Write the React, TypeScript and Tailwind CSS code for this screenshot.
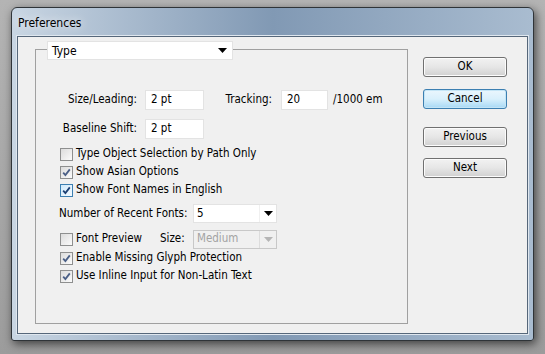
import { ReactNode } from "react";

function Check({ checked, focus }: { checked?: boolean; focus?: boolean }) {
  return (
    <span
      className={`relative inline-flex h-[13px] w-[13px] shrink-0 items-center justify-center border ${
        focus
          ? "border-[#3c7fb1] bg-gradient-to-br from-[#cfe9fb] to-[#f4faff]"
          : "border-[#8e8f8f] bg-gradient-to-br from-[#dcdcdc] to-[#fbfbfb]"
      }`}
    >
      {checked && (
        <svg width="9" height="9" viewBox="0 0 9 9">
          <path
            d="M1.2 4.6 L3.4 7 L7.8 1.4"
            fill="none"
            stroke={focus ? "#1c3f73" : "#4a5f86"}
            strokeWidth="1.8"
          />
        </svg>
      )}
    </span>
  );
}

function CheckRow({
  label,
  checked,
  focus,
}: {
  label: string;
  checked?: boolean;
  focus?: boolean;
}) {
  return (
    <div className="flex h-[18px] items-center gap-[3px] whitespace-nowrap">
      <Check checked={checked} focus={focus} />
      <span>{label}</span>
    </div>
  );
}

function Field({ value, w }: { value: string; w: string }) {
  return (
    <div
      className={`${w} flex h-[20px] items-center border border-[#e3e3e3] bg-white pl-[5px]`}
    >
      {value}
    </div>
  );
}

function Arrow({ color = "#000" }: { color?: string }) {
  return (
    <svg width="9" height="5" viewBox="0 0 9 5">
      <path d="M0 0 H9 L4.5 5 Z" fill={color} />
    </svg>
  );
}

function Select({
  value,
  w,
  disabled,
}: {
  value: string;
  w: string;
  disabled?: boolean;
}) {
  return (
    <div
      className={`${w} flex h-[19px] items-center border ${
        disabled
          ? "border-[#c8c8c8] bg-[#f0f0f0] text-[#a3a3a3]"
          : "border-[#e3e3e3] bg-white"
      }`}
    >
      <span className="flex-1 pl-[3px]">{value}</span>
      <span
        className={`flex h-full w-[17px] items-center justify-center border-l ${
          disabled ? "border-[#dcdcdc]" : "border-[#f0f0f0]"
        }`}
      >
        <Arrow color={disabled ? "#b5b5b5" : "#000"} />
      </span>
    </div>
  );
}

function Button({ children, focus }: { children: ReactNode; focus?: boolean }) {
  return (
    <div
      className={`flex h-[20px] w-[84px] items-center justify-center rounded-[3px] border ${
        focus
          ? "border-[#3c7fb1] bg-gradient-to-b from-[#eaf6fd] via-[#d9f0fc] to-[#a7d9f5] shadow-[inset_0_0_0_1px_#c4e5f6]"
          : "border-[#707070] bg-gradient-to-b from-[#f2f2f2] via-[#e6e6e6] to-[#d0d0d0] shadow-[inset_0_0_0_1px_#fcfcfc]"
      }`}
    >
      {children}
    </div>
  );
}

export default function App() {
  return (
    <div
      className="h-[354px] w-[545px] overflow-hidden bg-gradient-to-b from-[#b4b4b4] to-[#9c9c9c] pl-[11px] pt-[7px] text-[11.5px] text-black"
      style={{ fontFamily: '"DejaVu Sans Condensed", "DejaVu Sans", sans-serif' }}
    >
      <div className="flex h-[334px] w-[523px] flex-col rounded-t-[6px] rounded-b-[3px] border border-[#2f3438] bg-gradient-to-r from-[#c9d6e3] via-[#8199b4] to-[#a9bcd0] shadow-[2px_3px_10px_rgba(0,0,0,0.6)]">
        <div className="flex h-[28px] items-center pl-[6px] pt-[2px] text-[12px]">
          <span className="[text-shadow:0_0_8px_#ffffff]">Preferences</span>
        </div>
        <div className="mx-[5px] mb-[6px] flex flex-1 border border-[#56677a] bg-[#f0f0f0] shadow-[0_0_0_1px_#dfe7ef]">
          <div className="relative ml-[17px] mt-[12px] h-[275px] w-[373px] whitespace-nowrap border border-[#a0a0a0] pl-[24px]">
            <div className="absolute left-[11px] top-[-9px] flex h-[19px] w-[186px] items-center border border-[#e3e3e3] bg-white text-[12px]">
              <span className="flex-1 pl-[4px]">Type</span>
              <span className="flex w-[20px] justify-center">
                <Arrow />
              </span>
            </div>

            <div className="mt-[40px] flex items-center">
              <span className="w-[77px] text-right">Size/Leading:</span>
              <span className="ml-[8px]">
                <Field value="2 pt" w="w-[59px]" />
              </span>
              <span className="w-[68px] text-right">Tracking:</span>
              <span className="ml-[9px]">
                <Field value="20" w="w-[47px]" />
              </span>
              <span className="ml-[5px]">/1000 em</span>
            </div>
            <div className="mt-[9px] flex items-center">
              <span className="w-[77px] text-right">Baseline Shift:</span>
              <span className="ml-[8px]">
                <Field value="2 pt" w="w-[59px]" />
              </span>
            </div>

            <div className="mt-[6px] flex flex-col">
              <CheckRow label="Type Object Selection by Path Only" />
              <CheckRow label="Show Asian Options" checked />
              <CheckRow label="Show Font Names in English" checked focus />
            </div>

            <div className="ml-[-1px] mt-[5px] flex items-center">
              <span className="w-[126px]">Number of Recent Fonts:</span>
              <span className="ml-[8px]">
                <Select value="5" w="w-[84px]" />
              </span>
            </div>

            <div className="mt-[6px] flex h-[20px] items-center">
              <Check />
              <span className="ml-[3px] w-[84px]">Font Preview</span>
              <span className="w-[33px]">Size:</span>
              <Select value="Medium" w="w-[84px]" disabled />
            </div>
            <div className="flex flex-col">
              <CheckRow label="Enable Missing Glyph Protection" checked />
              <CheckRow label="Use Inline Input for Non-Latin Text" checked />
            </div>
          </div>

          <div className="ml-[15px] mt-[20px] flex flex-col">
            <Button>OK</Button>
            <div className="mt-[12px]">
              <Button focus>Cancel</Button>
            </div>
            <div className="mt-[18px]">
              <Button>Previous</Button>
            </div>
            <div className="mt-[11px]">
              <Button>Next</Button>
            </div>
          </div>
        </div>
      </div>
    </div>
  );
}
